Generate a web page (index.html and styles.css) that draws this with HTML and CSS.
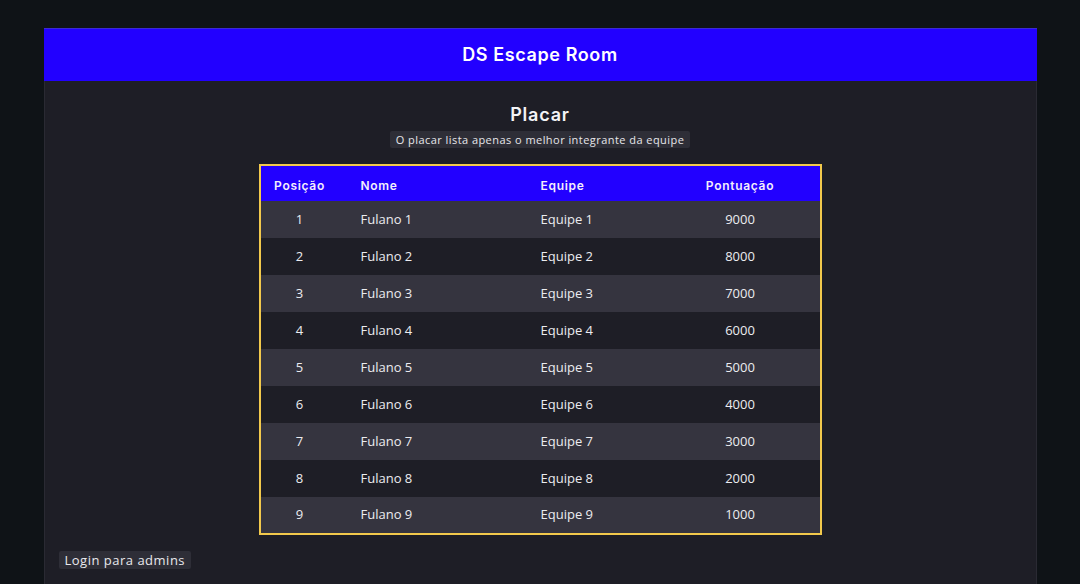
FILE: index.html
```html
<!DOCTYPE html>
<html lang="pt-BR">
<head>
<meta charset="utf-8">
<title>DS Escape Room</title>
<link rel="stylesheet" href="styles.css">
</head>
<body>
<div class="app">
  <header class="topbar">DS Escape Room</header>
  <main class="content">
    <h1 class="title">Placar</h1>
    <div class="subtitle-wrap"><span class="subtitle">O placar lista apenas o melhor integrante da equipe</span></div>
    <div class="table-wrap">
      <table class="board">
        <thead>
          <tr>
            <th class="c-pos">Posição</th>
            <th class="c-name">Nome</th>
            <th class="c-team">Equipe</th>
            <th class="c-score">Pontuação</th>
          </tr>
        </thead>
        <tbody>
          <tr><td class="c-pos">1</td><td class="c-name">Fulano 1</td><td class="c-team">Equipe 1</td><td class="c-score">9000</td></tr>
          <tr><td class="c-pos">2</td><td class="c-name">Fulano 2</td><td class="c-team">Equipe 2</td><td class="c-score">8000</td></tr>
          <tr><td class="c-pos">3</td><td class="c-name">Fulano 3</td><td class="c-team">Equipe 3</td><td class="c-score">7000</td></tr>
          <tr><td class="c-pos">4</td><td class="c-name">Fulano 4</td><td class="c-team">Equipe 4</td><td class="c-score">6000</td></tr>
          <tr><td class="c-pos">5</td><td class="c-name">Fulano 5</td><td class="c-team">Equipe 5</td><td class="c-score">5000</td></tr>
          <tr><td class="c-pos">6</td><td class="c-name">Fulano 6</td><td class="c-team">Equipe 6</td><td class="c-score">4000</td></tr>
          <tr><td class="c-pos">7</td><td class="c-name">Fulano 7</td><td class="c-team">Equipe 7</td><td class="c-score">3000</td></tr>
          <tr><td class="c-pos">8</td><td class="c-name">Fulano 8</td><td class="c-team">Equipe 8</td><td class="c-score">2000</td></tr>
          <tr><td class="c-pos">9</td><td class="c-name">Fulano 9</td><td class="c-team">Equipe 9</td><td class="c-score">1000</td></tr>
        </tbody>
      </table>
    </div>
    <div class="login-wrap"><span class="login">Login para admins</span></div>
  </main>
</div>
</body>
</html>
```

FILE: styles.css
```css
html, body {
  margin: 0;
  padding: 0;
}
body {
  background: #0f1317;
  font-family: "Open Sans", "Noto Sans", sans-serif;
  color: #f2f2f4;
  padding-top: 28px;
  height: 584px;
  box-sizing: border-box;
  overflow: hidden;
}
.app {
  width: 993px;
  margin: 0 auto;
  background: #1e1e26;
  border-left: 1px solid #2a2a33;
  border-right: 1px solid #2a2a33;
  box-sizing: border-box;
  min-height: 560px;
}
.topbar {
  height: 53px;
  background: #2200ff;
  border-top: 1px solid #3b2bd0;
  box-sizing: border-box;
  display: flex;
  align-items: center;
  justify-content: center;
  padding-bottom: 2px;
  font-family: "Inter", sans-serif;
  font-weight: 600;
  font-size: 18px;
  letter-spacing: 0.6px;
  color: #ffffff;
  margin: 0 -1px;
}
.content {
  padding: 23px 14px 0;
}
.title {
  margin: 0;
  text-align: center;
  font-family: "Inter", sans-serif;
  font-weight: 600;
  font-size: 18px;
  line-height: 22px;
  letter-spacing: 0.8px;
  color: #f4f4f6;
}
.subtitle-wrap {
  display: flex;
  justify-content: center;
  margin-top: 5px;
}
.subtitle {
  background: #2e2e37;
  font-size: 11px;
  line-height: 17px;
  padding: 0 6px;
  border-radius: 2px;
  letter-spacing: 0.45px;
  color: #e6e6ea;
}
.table-wrap {
  display: flex;
  justify-content: center;
  margin-top: 16px;
}
.board {
  width: 563px;
  border: 2px solid #f2c94c;
  border-collapse: collapse;
  font-size: 13px;
}
.board th,
.board td {
  box-sizing: border-box;
}
.board th {
  background: #2200ff;
  height: 36px;
  font-family: "Inter", sans-serif;
  font-weight: 600;
  font-size: 12px;
  letter-spacing: 0.7px;
  color: #f4eefc;
  padding: 3px 0 0;
}
.board td {
  height: 37px;
  padding: 0 0 2px;
  color: #ececf0;
}
.board tbody tr:nth-child(odd) td {
  background: #35343f;
}
.board tbody tr:nth-child(even) td {
  background: #1e1e26;
}
.c-pos {
  width: 79px;
  text-align: center;
}
.c-name {
  width: 180px;
  text-align: left;
  padding-left: 22px !important;
}
.c-team {
  width: 142px;
  text-align: left;
  padding-left: 22px !important;
}
.c-score {
  text-align: center;
}
.login-wrap {
  margin-top: 13px;
}
.login {
  display: inline-block;
  background: #2e2e37;
  font-size: 13px;
  line-height: 18px;
  padding: 0 6px;
  border-radius: 2px;
  letter-spacing: 0.5px;
  color: #e8e8ec;
}
```
